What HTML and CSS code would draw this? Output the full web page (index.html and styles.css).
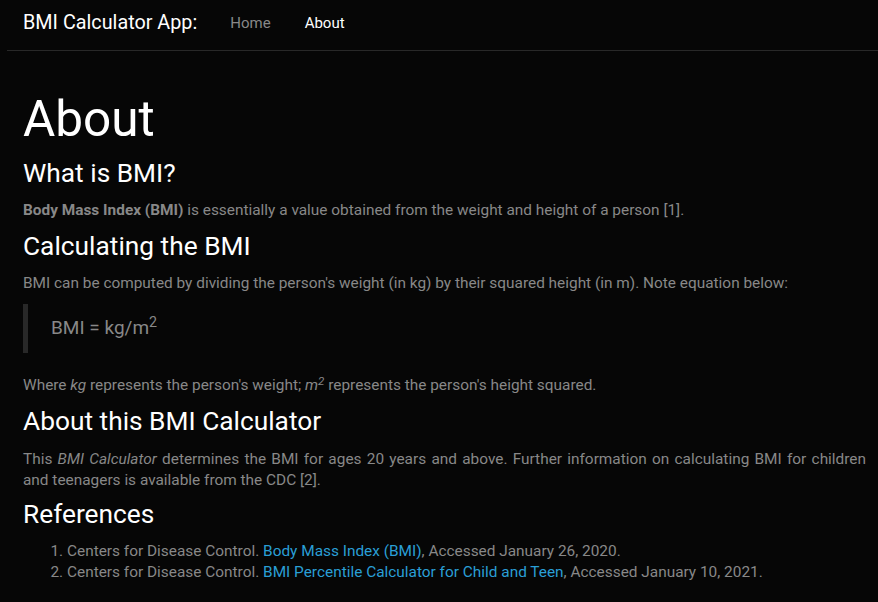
FILE: index.html
```html
<!DOCTYPE html>
<html lang="en">
<head>
<meta charset="utf-8">
<title>About - BMI Calculator App</title>
<link rel="stylesheet" href="styles.css">
</head>
<body>
<div class="page">
  <nav class="navbar">
    <span class="brand">BMI Calculator App:</span>
    <a class="nav-link" href="#">Home</a>
    <a class="nav-link active" href="#">About</a>
  </nav>
  <main class="content">
    <h1>About</h1>
    <h3>What is BMI?</h3>
    <p><strong>Body Mass Index (BMI)</strong> is essentially a value obtained from the weight and height of a person [1].</p>
    <h3>Calculating the BMI</h3>
    <p>BMI can be computed by dividing the person's weight (in kg) by their squared height (in m). Note equation below:</p>
    <blockquote>BMI = kg/m<sup>2</sup></blockquote>
    <p class="after-quote">Where <em>kg</em> represents the person's weight; <em>m<sup>2</sup></em> represents the person's height squared.</p>
    <h3>About this BMI Calculator</h3>
    <p class="justify">This <em>BMI Calculator</em> determines the BMI for ages 20 years and above. Further information on calculating BMI for children and teenagers is available from the CDC [2].</p>
    <h3>References</h3>
    <ol class="refs">
      <li>Centers for Disease Control. <a href="#">Body Mass Index (BMI)</a>, Accessed January 26, 2020.</li>
      <li>Centers for Disease Control. <a href="#">BMI Percentile Calculator for Child and Teen</a>, Accessed January 10, 2021.</li>
    </ol>
  </main>
</div>
</body>
</html>
```
FILE: styles.css
```css
html, body {
  margin: 0;
  padding: 0;
  background: #060606;
}
body {
  font-family: Roboto, "Liberation Sans", sans-serif;
  font-size: 15.4px;
  line-height: 21px;
  color: #888888;
}
.page {
  margin-left: 7px;
}
.navbar {
  display: flex;
  align-items: center;
  height: 51px;
  border-bottom: 1px solid #282828;
  padding: 0 0 5px 16px;
  box-sizing: border-box;
}
.brand {
  color: #ffffff;
  font-size: 19.8px;
  line-height: 24px;
  margin-right: 33px;
}
.nav-link {
  color: #888888;
  font-size: 15px;
  line-height: 20px;
  text-decoration: none;
  margin-right: 34px;
}
.nav-link.active {
  color: #ffffff;
}
.content {
  padding: 39px 12px 20px 16px;
}
h1, h3 {
  color: #ffffff;
  font-weight: 400;
  line-height: 1.2;
}
h1 {
  font-size: 49.5px;
  margin: 0 0 9px;
}
h3 {
  font-size: 26.3px;
  margin: 0 0 10.5px;
}
p {
  margin: 0 0 10px;
}
strong {
  font-weight: 700;
}
sup {
  font-size: 75%;
  line-height: 0;
  position: relative;
  vertical-align: baseline;
  top: -0.5em;
}
blockquote {
  margin: 0 0 22px;
  padding: 10px 0 11px 23px;
  border-left: 5px solid #282828;
  font-size: 19px;
  line-height: 28px;
}
.justify {
  text-align: justify;
  margin-bottom: 8px;
}
.refs {
  margin: 0;
  padding-left: 44px;
}
a {
  color: #2a9fd6;
  text-decoration: none;
}
```
